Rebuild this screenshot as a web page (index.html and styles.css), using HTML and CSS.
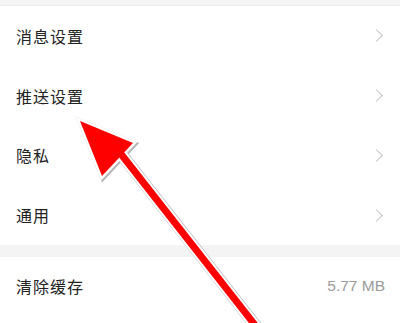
FILE: index.html
```html
<!DOCTYPE html>
<html lang="zh-CN">
<head>
  <meta charset="UTF-8" />
  <meta name="viewport" content="width=device-width, initial-scale=1.0"/>
  <title>设置</title>
  <link rel="stylesheet" href="styles.css">
</head>
<body>
  <div class="page">
    <div class="gap-top"></div>

    <div class="group">
      <div class="row"><span class="label">消息设置</span><span class="chevron"></span></div>
      <div class="row"><span class="label">推送设置</span><span class="chevron"></span></div>
      <div class="row"><span class="label">隐私</span><span class="chevron"></span></div>
      <div class="row"><span class="label">通用</span><span class="chevron"></span></div>
    </div>

    <div class="gap"></div>

    <div class="group">
      <div class="row row-last"><span class="label">清除缓存</span><span class="value">5.77 MB</span></div>
    </div>

    <!-- annotation arrow drawn over the list -->
    <svg class="arrow" viewBox="0 0 400 323" width="400" height="323">
      <g stroke-linecap="butt" stroke-linejoin="miter">
        <g transform="translate(1 1)">
          <line x1="121" y1="154" x2="262" y2="334" stroke="#b5b5b5" stroke-width="12" />
          <polygon points="80,121 133,143 102,176" fill="#b5b5b5" stroke="#b5b5b5" stroke-width="6" />
        </g>
        <line x1="121" y1="154" x2="262" y2="334" stroke="#ffffff" stroke-width="11" />
        <polygon points="80,121 133,143 102,176" fill="#ffffff" stroke="#ffffff" stroke-width="5" />
        <line x1="121" y1="154" x2="262" y2="334" stroke="#ff0000" stroke-width="7" />
        <polygon points="80,121 133,143 102,176" fill="#ff0000" />
      </g>
    </svg>
  </div>
</body>
</html>
```

FILE: styles.css
```css
:root {
  --bg-gray: #f4f4f4;
  --text-color: #222222;
  --muted: #9a9a9a;
  --chevron: #c2c2c2;
}

body {
  margin: 0;
  background-color: #ffffff;
  font-family: "Noto Sans CJK SC", "Noto Sans", sans-serif;
  color: var(--text-color);
}

.page {
  position: relative;
  width: 400px;
  height: 323px;
  overflow: hidden;
}

.gap-top {
  height: 6px;
  background-color: var(--bg-gray);
  border-bottom: 1px solid #ececec;
  box-sizing: border-box;
}

.gap {
  height: 12px;
  background-color: var(--bg-gray);
}

.group {
  display: flex;
  flex-direction: column;
}

.row {
  height: 59.75px;
  display: flex;
  align-items: center;
  justify-content: space-between;
  padding: 0 15px 0 16px;
}

.row-last {
  height: 57px;
}

.label {
  font-size: 16px;
  letter-spacing: 1px;
}

.chevron {
  width: 8px;
  height: 8px;
  border-top: 1.5px solid var(--chevron);
  border-right: 1.5px solid var(--chevron);
  transform: rotate(45deg);
  margin-right: 4px;
}

.value {
  font-family: "Liberation Sans", sans-serif;
  font-size: 15.5px;
  color: var(--muted);
}

/* arrow overlay */
.arrow {
  position: absolute;
  top: 0;
  left: 0;
  pointer-events: none;
}
```
